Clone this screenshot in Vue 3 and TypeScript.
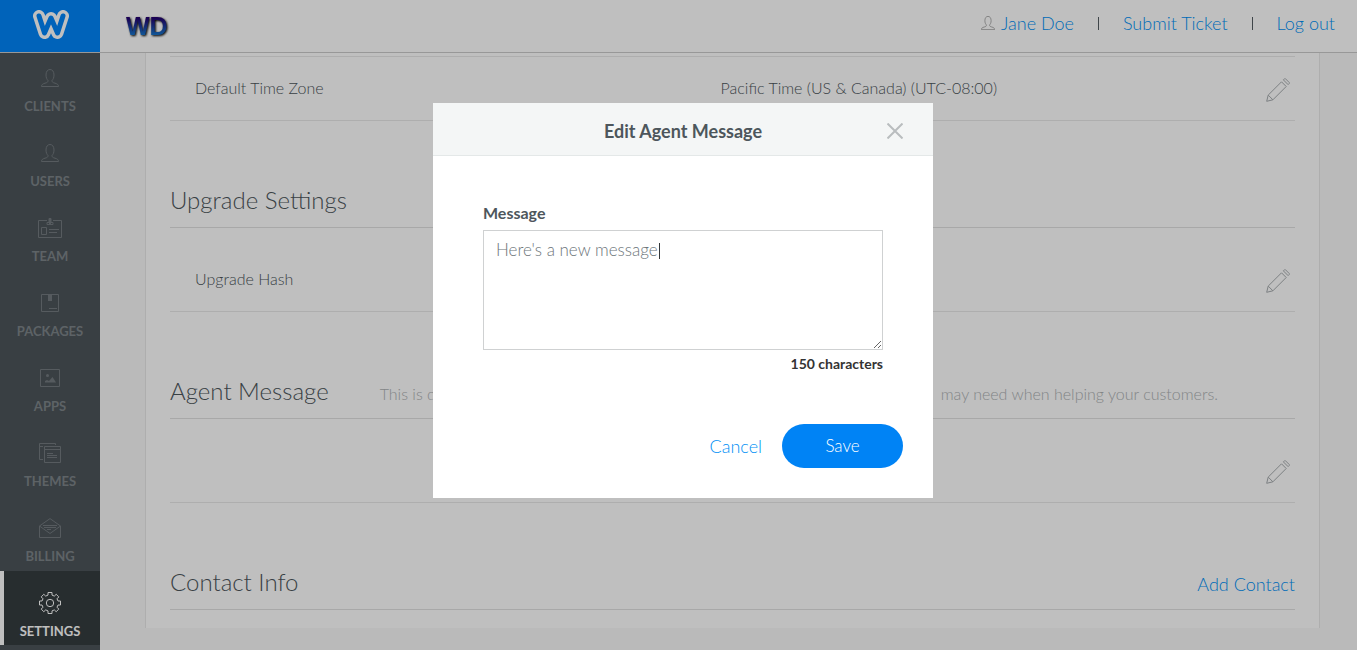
<script setup lang="ts">
import { ref } from 'vue'

interface NavItem {
  id: string
  label: string
}

const navItems: NavItem[] = [
  { id: 'clients', label: 'Clients' },
  { id: 'users', label: 'Users' },
  { id: 'team', label: 'Team' },
  { id: 'packages', label: 'Packages' },
  { id: 'apps', label: 'Apps' },
  { id: 'themes', label: 'Themes' },
  { id: 'billing', label: 'Billing' },
  { id: 'settings', label: 'Settings' },
]

const active = ref('settings')
const modalOpen = ref(true)
const showCaret = ref(true)
const message = ref("Here's a new message")
</script>

<template>
  <div class="app">
    <header class="topbar">
      <a class="brand" href="#" aria-label="Home">
        <svg width="36" height="29" viewBox="0 0 36 29" fill="none" stroke-linecap="round" stroke-linejoin="round">
          <path class="brand-outer" d="M6 6L11.500 23L18 8L24.500 23L30 6" />
          <path class="brand-inner" d="M6 6L11.500 23L18 8L24.500 23L30 6" />
        </svg>
      </a>
      <span class="wd">WD</span>
      <nav class="account">
        <a href="#">
          <svg class="person" width="14" height="14" viewBox="0 0 18 18" fill="none">
            <path d="M.5 17.500h17c0-2-1.500-2.800-3.500-3.300-2-.5-3-1-3-2.700 1-1 2-2.700 2-5.500 0-3.500-1.600-5.500-4-5.500S5 2.500 5 6c0 2.800 1 4.500 2 5.500 0 1.700-1 2.200-3 2.700S.5 15.500.5 17.500z" />
          </svg>
          Jane Doe
        </a>
        <span class="bar"></span>
        <a href="#">Submit Ticket</a>
        <span class="bar"></span>
        <a href="#">Log out</a>
      </nav>
    </header>

    <div class="columns">
      <nav class="sidebar">
        <a
          v-for="item in navItems"
          :key="item.id"
          href="#"
          class="nav-item"
          :class="{ active: item.id === active }"
          @click.prevent="active = item.id"
        >
          <span class="icon">
            <svg v-if="item.id === 'clients' || item.id === 'users'" width="18" height="18" viewBox="0 0 18 18">
              <path d="M.5 17.500h17c0-2-1.500-2.800-3.500-3.300-2-.5-3-1-3-2.700 1-1 2-2.700 2-5.500 0-3.500-1.600-5.500-4-5.500S5 2.500 5 6c0 2.800 1 4.500 2 5.500 0 1.700-1 2.200-3 2.700S.5 15.500.5 17.500z" />
            </svg>
            <svg v-else-if="item.id === 'team'" width="24" height="20" viewBox="0 0 24 20">
              <path d="M9 2.500H.5v17h23v-17H15M11 .5h2v4h2v2H9v-2h2zM3.500 9.500h5v7h-5zM11 11.500h10M11 14.500h8" />
              <path class="solid" d="M11 0h2v6h-2z" />
            </svg>
            <svg v-else-if="item.id === 'packages'" width="18" height="18" viewBox="0 0 18 18">
              <path d="M.5.5h17v17H.5zM8 14.500h8" />
              <path class="solid" d="M7 0h4v7H7z" />
            </svg>
            <svg v-else-if="item.id === 'apps'" width="20" height="18" viewBox="0 0 20 18">
              <path d="M.5.5h19v17H.5z" />
              <path class="solid" d="M5 13.500v-1.500l2-1 2 1L12.500 8 16 13.500z" />
              <circle class="solid" cx="7.500" cy="6.500" r="1.500" />
            </svg>
            <svg v-else-if="item.id === 'themes'" width="22" height="20" viewBox="0 0 22 20">
              <path d="M4 16.500H.5V.5h16V2M.5 3.500H4M5.500 3.500h16v16h-16zM5.500 6.500h16M8 10.500h6M8 12.500h10M8 14.500h10" />
            </svg>
            <svg v-else-if="item.id === 'billing'" width="22" height="20" viewBox="0 0 22 20">
              <path d="M.5 8L11 .6 21.500 8v11.500H.5zM.5 8L11 15.500 21.500 8M4 7.500h14M5 9.500h12M8 11.500h4" />
            </svg>
            <svg v-else width="22" height="22" viewBox="0 0 22 22">
              <path d="M9 .5h4v2.600l2.300 1 1.900-1.800 2.600 2.600-1.800 1.900 1 2.200h2.500v4H19l-1 2.200 1.800 1.900-2.600 2.600-1.900-1.800-2.300 1v2.600H9v-2.600l-2.300-1-1.900 1.800-2.600-2.600L4 15.200 3 13H.5V9H3l1-2.200-1.800-1.900 2.600-2.600 1.900 1.800 2.300-1z" />
              <circle cx="11" cy="11" r="3.700" />
            </svg>
          </span>
          <span>{{ item.label }}</span>
        </a>
      </nav>

      <main class="content">
        <div class="panel">
          <div class="row first">
            <span class="name">Default Time Zone</span>
            <span class="value">Pacific Time (US &amp; Canada) (UTC-08:00)</span>
            <button class="edit" aria-label="Edit time zone">
              <svg width="24" height="24" viewBox="0 0 24 24">
                <path d="M.7 23.300l1.500-6.200L15.500 3.800l4.700 4.700L6.900 21.800zM2.200 17.100l4.700 4.700M17.400 1.900L18.600.7h.8l3.900 3.900v.8l-1.200 1.200z" />
              </svg>
            </button>
          </div>

          <section>
            <div class="heading"><h2>Upgrade Settings</h2></div>
            <div class="row spaced">
              <span class="name">Upgrade Hash</span>
              <span class="value"></span>
              <button class="edit" aria-label="Edit upgrade hash">
                <svg width="24" height="24" viewBox="0 0 24 24">
                  <path d="M.7 23.300l1.500-6.200L15.500 3.800l4.700 4.700L6.900 21.800zM2.200 17.100l4.700 4.700M17.400 1.900L18.600.7h.8l3.900 3.900v.8l-1.200 1.200z" />
                </svg>
              </button>
            </div>
          </section>

          <section>
            <div class="heading">
              <h2>Agent Message</h2>
              <p class="note"><span>This is displayed to your support agents, </span><span>may need when helping your customers.</span></p>
            </div>
            <div class="row spaced">
              <span class="name"></span>
              <span class="value"></span>
              <button class="edit" aria-label="Edit agent message" @click="modalOpen = true">
                <svg width="24" height="24" viewBox="0 0 24 24">
                  <path d="M.7 23.300l1.500-6.200L15.500 3.800l4.700 4.700L6.900 21.800zM2.200 17.100l4.700 4.700M17.400 1.900L18.600.7h.8l3.900 3.900v.8l-1.200 1.200z" />
                </svg>
              </button>
            </div>
          </section>

          <section>
            <div class="heading">
              <h2>Contact Info</h2>
              <a class="add" href="#">Add Contact</a>
            </div>
          </section>
        </div>
      </main>
    </div>

    <div v-if="modalOpen" class="backdrop">
      <form class="modal" role="dialog" aria-labelledby="modal-title" @submit.prevent="modalOpen = false">
        <div class="modal-head">
          <h1 id="modal-title">Edit Agent Message</h1>
          <button type="button" class="close" aria-label="Close" @click="modalOpen = false">
            <svg width="16" height="16" viewBox="0 0 16 16"><path d="M.5.5l15 15M15.500.5l-15 15" /></svg>
          </button>
        </div>
        <div class="modal-body">
          <label for="message">Message</label>
          <div class="field">
            <textarea id="message" v-model="message" maxlength="150" @focus="showCaret = false"></textarea>
            <span v-if="showCaret" class="caret"></span>
          </div>
          <p class="limit">150 characters</p>
        </div>
        <div class="modal-foot">
          <button type="button" class="cancel" @click="modalOpen = false">Cancel</button>
          <button type="submit" class="save">Save</button>
        </div>
      </form>
    </div>
  </div>
</template>

<style>
body {
  margin: 0;
}
</style>

<style scoped>
.app {
  position: relative;
  display: flex;
  flex-direction: column;
  height: 100vh;
  overflow: hidden;
  background: #f8f8f8;
  color: #4d565b;
  font-family: Lato, "Open Sans", sans-serif;
  font-weight: 300;
  font-size: 16px;
}
a {
  color: #0090f5;
  text-decoration: none;
}
button {
  padding: 0;
  border: 0;
  background: none;
  font: inherit;
  cursor: pointer;
}
h1,
h2,
p {
  margin: 0;
}
.topbar {
  display: flex;
  align-items: center;
  flex: none;
  height: 52px;
  border-bottom: 1px solid #cbcbcb;
  background: #fff;
}
.brand {
  display: flex;
  align-items: center;
  justify-content: center;
  width: 100px;
  height: 52px;
  padding: 0 0 4px 2px;
  box-sizing: border-box;
  background: #0084f8;
}
.brand-outer {
  stroke: #fff;
  stroke-width: 12;
}
.brand-inner {
  stroke: #0084f8;
  stroke-width: 5;
}
.wd {
  margin-left: 26px;
  background: linear-gradient(#23006e 25%, #1583d6 85%);
  background-clip: text;
  -webkit-background-clip: text;
  color: transparent;
  font: bold 25px/32px "Liberation Sans", Arial, sans-serif;
  filter: drop-shadow(1px 1px 1px #000);
}
.account {
  display: flex;
  align-items: center;
  gap: 24px;
  margin-left: auto;
  padding: 0 22px 6px 0;
  font-size: 18px;
}
.person {
  fill: none;
  stroke: #999;
  margin-right: 2px;
}
.bar {
  width: 1px;
  height: 13px;
  background: #545d62;
}
.columns {
  display: flex;
  flex: 1;
  min-height: 0;
}
.sidebar {
  display: flex;
  flex-direction: column;
  flex: none;
  width: 100px;
  background: #4d555a;
}
.nav-item {
  display: flex;
  flex-direction: column;
  align-items: center;
  justify-content: flex-end;
  gap: 9px;
  flex: none;
  box-sizing: border-box;
  height: 75px;
  padding-bottom: 6px;
  border-bottom: 1px solid #4d555a;
  color: #7d8489;
  font-size: 13px;
  line-height: 16px;
  font-weight: 700;
  text-transform: uppercase;
}
.nav-item:first-child {
  height: 68px;
}
.icon {
  display: flex;
  align-items: center;
  height: 22px;
}
.nav-item svg {
  fill: none;
  stroke: #737a7f;
}
.nav-item .solid {
  fill: #737a7f;
  stroke: none;
}
.nav-item.active {
  padding-right: 4px;
  background: #343c3f;
  box-shadow: inset 4px 0 #fff;
  padding-left: 4px;
  color: #fff;
}
.nav-item.active svg {
  stroke: #fff;
}
.content {
  flex: 1;
  padding: 0 37px 0 45px;
}
.panel {
  box-sizing: border-box;
  padding: 3px 24px 18px;
  border: solid #e8e8e8;
  border-width: 0 1px;
  background: #fff;
}
.row {
  display: flex;
  align-items: center;
  height: 61px;
  padding: 0 5px 2px 25px;
  border-bottom: 1px solid #e8e8e8;
}
.row.first {
  border-top: 1px solid #e8e8e8;
}
.row.spaced {
  padding-top: 20px;
}
.name {
  flex: 0 0 48%;
}
.value {
  flex: 1;
}
.edit {
  display: flex;
  margin-top: 4px;
}
.edit svg {
  fill: none;
  stroke: #a6abae;
}
.heading {
  display: flex;
  align-items: flex-end;
  height: 95px;
  padding-bottom: 11px;
  border-bottom: 1px solid #e0e0e0;
}
h2 {
  font-size: 24px;
  line-height: 32px;
  font-weight: 300;
}
.note {
  display: flex;
  flex: 1;
  justify-content: space-between;
  margin: 0 77px 0 51px;
  color: #aeb2b4;
  line-height: 26px;
}
.add {
  margin-left: auto;
  font-size: 18px;
  line-height: 28px;
}
.backdrop {
  position: absolute;
  inset: 0;
  display: flex;
  align-items: flex-start;
  justify-content: center;
  padding: 103px 0 0 9px;
  background: rgba(0, 0, 0, 0.25);
}
.modal {
  width: 500px;
  background: #fff;
}
.modal-head {
  display: flex;
  align-items: center;
  padding: 4px 30px 0 46px;
  box-sizing: border-box;
  height: 53px;
  border-bottom: 1px solid #e4e8e8;
  background: #f4f6f6;
}
h1 {
  flex: 1;
  text-align: center;
  font-size: 18px;
  font-weight: 700;
  color: #4d565c;
}
.close {
  display: flex;
}
.close svg {
  stroke: #b9bdbf;
  stroke-width: 2;
}
.modal-body {
  padding: 47px 50px 0;
}
label {
  display: block;
  height: 27px;
  line-height: 20px;
  font-weight: 700;
  color: #4d565c;
}
.field {
  position: relative;
  display: flex;
}
textarea {
  box-sizing: border-box;
  width: 100%;
  height: 120px;
  padding: 8px 12px;
  border: 1px solid #cfd1d2;
  border-radius: 0;
  outline: none;
  background: #fff;
  color: #6d757a;
  font: 300 17px/22px Lato, "Open Sans", sans-serif;
  resize: both;
}
.caret {
  position: absolute;
  top: 13px;
  left: 176px;
  width: 1px;
  height: 16px;
  background: #33383b;
}
.limit {
  margin-top: 5px;
  text-align: right;
  font-size: 14px;
  line-height: 18px;
  font-weight: 700;
  color: #333;
}
.modal-foot {
  display: flex;
  justify-content: flex-end;
  align-items: center;
  gap: 20px;
  padding: 51px 30px 30px;
}
.cancel {
  color: #0090f5;
  font-size: 18px;
}
.save {
  width: 121px;
  height: 44px;
  padding-bottom: 2px;
  border-radius: 22px;
  background: #0083f5;
  color: #fff;
  font-size: 17px;
}
</style>
